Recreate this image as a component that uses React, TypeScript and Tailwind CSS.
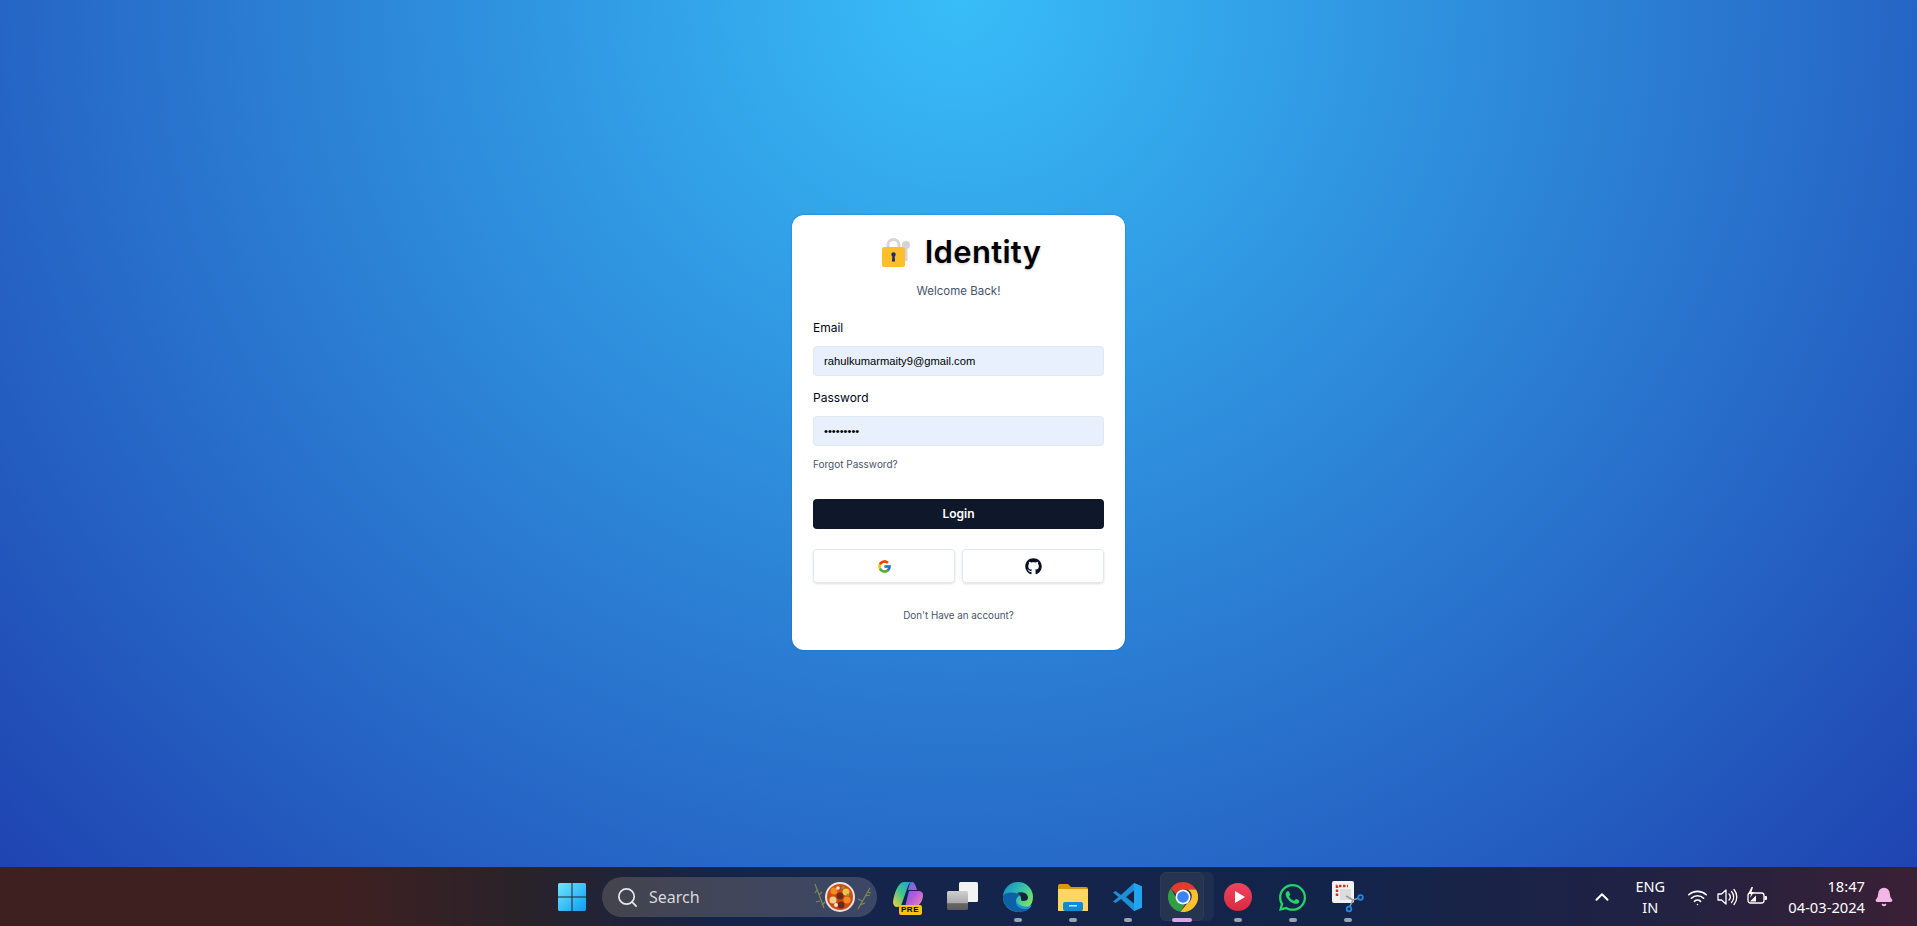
import React from "react";
import { Search, ChevronUp, Wifi, Bell } from "lucide-react";
import { FcGoogle } from "react-icons/fc";
import { FaGithub, FaWhatsapp } from "react-icons/fa";

function LockIcon() {
  return (
    <svg width="28" height="29" viewBox="0 0 28 29">
      <circle cx="24" cy="7" r="4" fill="#d4d4d4" />
      <rect x="22.500" y="9" width="3" height="14" fill="#d4d4d4" />
      <path d="M6 10V7a5.500 5.500 0 0 1 11 0v3" fill="none" stroke="#d6d6d6" strokeWidth="3" />
      <rect x="0" y="9" width="23" height="20" rx="2.500" fill="#fbbf2e" />
      <circle cx="11.500" cy="16.500" r="2.200" fill="#1e2a6e" />
      <path d="M10.500 17h2l.6 6.500h-3.200z" fill="#1e2a6e" />
    </svg>
  );
}

function WindowsLogo() {
  return (
    <svg width="30" height="30" viewBox="0 0 30 30">
      <defs>
        <linearGradient id="win" x1="0" y1="0" x2="1" y2="1">
          <stop offset="0" stopColor="#6fe6ff" />
          <stop offset="1" stopColor="#0f9bf5" />
        </linearGradient>
      </defs>
      <path d="M1 2.500A1.500 1.500 0 0 1 2.500 1H14.500v13.500H1zM15.500 1h12A1.500 1.500 0 0 1 29 2.500v12H15.500zM1 15.500h13.500V29h-12A1.500 1.500 0 0 1 1 27.500zM15.500 15.500H29v12a1.500 1.500 0 0 1-1.500 1.500h-12z" fill="url(#win)" />
    </svg>
  );
}

function Soup() {
  return (
    <svg width="64" height="34" viewBox="0 0 64 34">
      <g stroke="#7f8a55" strokeWidth="1.200" fill="none">
        <path d="M7 4l9 24M9 10l-2 3M11 15l3-3M12 21l-4 1M14 25l3-3" />
        <path d="M62 8l-12 21M60 12l3 1M57 16l5-1M54 21l-4-2M52 25l5-2" />
      </g>
      <circle cx="32" cy="17" r="15" fill="#e9e4dc" />
      <circle cx="32" cy="17" r="13" fill="#cf4a17" />
      <circle cx="26" cy="11" r="3.500" fill="#f58a1f" />
      <circle cx="38" cy="12" r="3.500" fill="#f2c14e" />
      <circle cx="32" cy="16" r="3.500" fill="#6b2a1a" />
      <circle cx="39" cy="20" r="3.500" fill="#f58a1f" />
      <circle cx="25" cy="20" r="3.500" fill="#f0d08a" />
      <circle cx="33" cy="25" r="3.500" fill="#6b2a1a" />
      <circle cx="30" cy="8" r="1.800" fill="#efe7dc" />
      <circle cx="35" cy="7.500" r="1.500" fill="#5fa83a" />
      <circle cx="28" cy="25" r="2" fill="#efe7dc" />
      <circle cx="40" cy="15" r="1.500" fill="#5fa83a" />
    </svg>
  );
}

function Copilot() {
  return (
    <div className="relative w-[30px] h-[30px]">
      <svg width="30" height="27" viewBox="0 0 30 27">
        <defs>
          <linearGradient id="co1" x1="0" y1="1" x2="1" y2="0">
            <stop offset="0" stopColor="#f5d33b" />
            <stop offset="0.500" stopColor="#3fc48e" />
            <stop offset="1" stopColor="#1f9be0" />
          </linearGradient>
          <linearGradient id="co2" x1="0" y1="0" x2="1" y2="1">
            <stop offset="0" stopColor="#3b7de8" />
            <stop offset="0.500" stopColor="#b05ad8" />
            <stop offset="1" stopColor="#f08bb4" />
          </linearGradient>
        </defs>
        <path d="M11 0h8c-2 0-3 2-4 4L9 21c-1 3-2 4-5 4-2 0-4-2-4-5C1 12 5 0 11 0z" fill="url(#co1)" />
        <path d="M19 0c2 0 3 2 4 5l1 3h-9l1-4c1-2 1-4 3-4zM16 9h9c3 0 5 1 5 4 0 6-4 12-9 12h-9z" fill="url(#co2)" />
      </svg>
      <span className="absolute left-[6px] bottom-[-3px] w-[23px] h-[10px] bg-[#f6c21c] rounded-[2px] text-[8px] leading-[10px] font-bold tracking-[0.5px] text-black text-center font-['Liberation_Sans',sans-serif]">
        PRE
      </span>
    </div>
  );
}

function TaskView() {
  return (
    <svg width="32" height="30" viewBox="0 0 32 30">
      <defs>
        <linearGradient id="tv" x1="0" y1="0" x2="0" y2="1">
          <stop offset="0" stopColor="#cfcfcf" />
          <stop offset="0.650" stopColor="#a8a8a8" />
          <stop offset="0.660" stopColor="#666666" />
          <stop offset="1" stopColor="#5a5a5a" />
        </linearGradient>
      </defs>
      <rect x="12" y="0" width="19" height="20" rx="1.500" fill="#f3f3f3" />
      <rect x="0" y="9" width="21" height="19" rx="1.500" fill="url(#tv)" />
    </svg>
  );
}

function Edge() {
  return (
    <svg width="30" height="30" viewBox="0 0 30 30">
      <defs>
        <linearGradient id="ed1" x1="0" y1="0" x2="1" y2="0.600">
          <stop offset="0" stopColor="#0f8ad0" />
          <stop offset="0.600" stopColor="#36c3a8" />
          <stop offset="1" stopColor="#7de35e" />
        </linearGradient>
      </defs>
      <circle cx="15" cy="15" r="15" fill="url(#ed1)" />
      <path d="M0 14c0 9 7 16 16 16 4 0 8-1 11-4-6 2-14 0-14-7 0-3 2-5 5-6-6-3-15-4-18 1z" fill="#0d5fa8" />
      <path d="M14 11c5-2 11 0 11 5 0 2-2 3-5 3-2 0-2-1-2-2 0-3-1-5-4-6z" fill="#14233f" />
      <path d="M13 19c0 5 5 9 12 8 2-1 3-2 4-4-3 2-7 2-10 1-3-1-5-3-6-5z" fill="#1e8ee0" />
    </svg>
  );
}

function Folder() {
  return (
    <svg width="30" height="27" viewBox="0 0 30 27">
      <path d="M0 2a2 2 0 0 1 2-2h8l3 3h15a2 2 0 0 1 2 2v3H0z" fill="#d99a0a" />
      <path d="M0 5h30v22H0z" fill="#ffd661" />
      <rect x="5" y="18" width="20" height="9" rx="2" fill="#0f8ad8" />
      <rect x="11" y="21" width="8" height="1.500" fill="#bfe4fb" />
    </svg>
  );
}

function VsCode() {
  return (
    <svg width="30" height="30" viewBox="0 0 30 30">
      <path d="M21 1l8 3.500v21L21 29 8 17 2.500 21 0 19.500 5.500 15 0 10.500 2.500 9 8 13z" fill="#1b8fd8" />
      <path d="M21 8.500L13 15l8 6.500z" fill="#14233f" />
      <path d="M21 1l8 3.500v21L21 29z" fill="#22a5f1" />
    </svg>
  );
}

function Chrome() {
  return (
    <svg width="30" height="30" viewBox="0 0 30 30">
      <path d="M15 0a15 15 0 0 1 13 7.500H15a7.500 7.500 0 0 0-7 4.800L2.800 6.200A15 15 0 0 1 15 0z" fill="#e33b2e" />
      <path d="M2.800 6.200L9 17.500a7.500 7.500 0 0 0 8 5L12.500 29.800A15 15 0 0 1 2.800 6.200z" fill="#2f9e44" />
      <path d="M28 7.500A15 15 0 0 1 12.500 29.800L19.500 21a7.500 7.500 0 0 0 0-13.500z" fill="#fbc02d" />
      <circle cx="15" cy="15" r="7.500" fill="#fff" />
      <circle cx="15" cy="15" r="5.800" fill="#3b82f6" />
    </svg>
  );
}

function PlayIcon() {
  return (
    <svg width="28" height="28" viewBox="0 0 28 28">
      <defs>
        <linearGradient id="pl" x1="0" y1="0" x2="0" y2="1">
          <stop offset="0" stopColor="#f0435f" />
          <stop offset="1" stopColor="#d92a3f" />
        </linearGradient>
      </defs>
      <circle cx="14" cy="14" r="14" fill="url(#pl)" />
      <path d="M11 8l10 6-10 6z" fill="#fff" />
    </svg>
  );
}

function Snip() {
  return (
    <svg width="32" height="32" viewBox="0 0 32 32">
      <rect x="0" y="0" width="22" height="22" rx="2" fill="#f2f2f2" />
      <path d="M5 15V5h11" fill="none" stroke="#c8361c" strokeWidth="2.500" strokeDasharray="2.500 1.500" />
      <rect x="8" y="8" width="11" height="11" fill="#dcdcdc" />
      <path d="M14 15l7 4 6-2M21 19l-3 6" fill="none" stroke="#9a9a9a" strokeWidth="1.500" />
      <circle cx="28.500" cy="16.500" r="2.300" fill="none" stroke="#1e88e5" strokeWidth="1.800" />
      <circle cx="17" cy="28" r="2.300" fill="none" stroke="#1e88e5" strokeWidth="1.800" />
    </svg>
  );
}

function VolumeIcon() {
  return (
    <svg width="21" height="20" viewBox="0 0 21 20" fill="none" stroke="currentColor" strokeWidth="1.300">
      <path d="M1 7v6h3.500L9 17V3L4.500 7z" strokeLinejoin="round" />
      <path d="M12 7a4 4 0 0 1 0 6M14.500 4.500a8 8 0 0 1 0 11M17 2.500a11.500 11.500 0 0 1 0 15" strokeLinecap="round" />
    </svg>
  );
}

function BatteryIcon() {
  return (
    <svg width="21" height="20" viewBox="0 0 21 20">
      <rect x="1" y="6" width="16" height="10" rx="2.500" fill="none" stroke="currentColor" strokeWidth="1.300" />
      <rect x="17.500" y="9" width="2.500" height="4" rx="1" fill="currentColor" />
      <path d="M3 14.500l6-6v6z" fill="currentColor" />
      <path d="M4.500 0L1 7h3L3 11l4-6H4.500l1.500-5z" fill="currentColor" />
    </svg>
  );
}

function TaskIcon({ children, open = false }: { children: React.ReactNode; open?: boolean }) {
  return (
    <div className="relative w-[55px] h-full flex items-center justify-center">
      {children}
      {open && <span className="absolute bottom-[4px] w-[8px] h-[4px] rounded-full bg-[#98a2b3]" />}
    </div>
  );
}

export default function App() {
  return (
    <div className="w-full h-[926px] flex flex-col overflow-hidden font-['Inter',sans-serif] bg-[radial-gradient(ellipse_at_top,#38bdf8,#1e40af)]">
      <main className="flex-1 flex items-center justify-center pb-[2px]">
        <div className="w-[333px] h-[435px] bg-white rounded-[12px] px-[21px] pt-[17px] shadow-[0_0_2px_rgba(3,105,200,0.8)]">
          <div className="flex items-center justify-center gap-[15px] h-[40px] pl-[6px]">
            <LockIcon />
            <h1 className="text-[31px] leading-[40px] font-semibold tracking-[0.3px] text-black [text-shadow:0_1px_3px_rgba(0,0,0,0.2)]">
              Identity
            </h1>
          </div>
          <p className="mt-[11px] text-center text-[11.500px] leading-[16px] text-[#475569]">Welcome Back!</p>
          <div className="mt-[21px] text-[12px] leading-[16px] text-[#020617]">Email</div>
          <input
            readOnly
            value="rahulkumarmaity9@gmail.com"
            className="mt-[10px] block w-full h-[30px] px-[10px] rounded-[4px] border border-[#e2e8f0] bg-[#e8f0fe] text-[11.200px] text-black font-['Liberation_Sans',sans-serif] outline-none"
          />
          <div className="mt-[14px] text-[12px] leading-[16px] text-[#020617]">Password</div>
          <input
            readOnly
            type="password"
            value="rahul1234"
            className="mt-[10px] block w-full h-[30px] px-[10px] rounded-[4px] border border-[#e2e8f0] bg-[#e8f0fe] text-[11.200px] text-black font-['Liberation_Sans',sans-serif] outline-none"
          />
          <a className="block mt-[11px] text-[10px] leading-[14px] text-[#475569]">Forgot Password?</a>
          <button className="mt-[28px] block w-full h-[30px] rounded-[4px] bg-[#0f172a] text-white text-[12px] font-semibold">
            Login
          </button>
          <div className="mt-[20px] grid grid-cols-2 gap-[7px]">
            <button className="h-[34px] rounded-[4px] border border-[#e2e8f0] shadow-sm flex items-center justify-center">
              <FcGoogle className="w-[15px] h-[15px]" />
            </button>
            <button className="h-[34px] rounded-[4px] border border-[#e2e8f0] shadow-sm flex items-center justify-center">
              <FaGithub className="w-[17px] h-[17px] text-[#0b1020]" />
            </button>
          </div>
          <p className="mt-[26px] text-center text-[9.800px] leading-[14px] text-[#475569]">Don't Have an account?</p>
        </div>
      </main>

      <footer className="h-[59px] flex items-center pl-[544px] border-t border-[#1a2a55] bg-[linear-gradient(90deg,#3e2021_0%,#3e2021_18%,#2a2229_27%,#15244a_38%,#13244a_70%,#1f2244_85%,#3a2035_100%)] font-['Noto_Sans',sans-serif] text-white">
        <TaskIcon><WindowsLogo /></TaskIcon>
        <div className="ml-[3px] mr-[3px] w-[275px] h-[40px] rounded-full flex items-center bg-[linear-gradient(90deg,#44444f,#3c4766)] pl-[14px] shrink-0">
          <Search className="w-[23px] h-[23px] text-[#e6e6e6]" strokeWidth={1.800} />
          <span className="ml-[10px] text-[16px] text-[#d9d9d9] flex-1">Search</span>
          <div className="mr-[5px]"><Soup /></div>
        </div>
        <TaskIcon><Copilot /></TaskIcon>
        <TaskIcon><TaskView /></TaskIcon>
        <TaskIcon open><Edge /></TaskIcon>
        <TaskIcon open><Folder /></TaskIcon>
        <TaskIcon open><VsCode /></TaskIcon>
        <div className="relative w-[55px] h-full flex items-center justify-center">
          <span className="absolute left-[9px] top-[4px] w-[50px] h-[49px] rounded-[6px] bg-[#1f2d4f]" />
          <span className="absolute left-[5px] top-[4px] w-[44px] h-[49px] rounded-[6px] bg-[#27344f] border border-[#2e3b58]" />
          <div className="relative"><Chrome /></div>
          <span className="absolute bottom-[4px] left-[17px] w-[20px] h-[4px] rounded-full bg-[#d9a6e6]" />
        </div>
        <TaskIcon open><PlayIcon /></TaskIcon>
        <TaskIcon open><FaWhatsapp className="w-[31px] h-[31px] text-[#25d366]" /></TaskIcon>
        <TaskIcon open><Snip /></TaskIcon>

        <div className="flex-1" />
        <ChevronUp className="w-[22px] h-[22px] mr-[15px]" strokeWidth={2.200} />
        <div className="w-[44px] text-center text-[14.500px] leading-[21px]">
          <div>ENG</div>
          <div>IN</div>
        </div>
        <Wifi className="ml-[15px] w-[21px] h-[21px]" strokeWidth={1.800} />
        <div className="ml-[9px]"><VolumeIcon /></div>
        <div className="ml-[9px]"><BatteryIcon /></div>
        <div className="ml-[20px] text-right text-[14.700px] leading-[21px]">
          <div>18:47</div>
          <div>04-03-2024</div>
        </div>
        <Bell className="ml-[9px] mr-[23px] w-[20px] h-[20px] text-[#f3b6e6] fill-[#f3b6e6]" />
      </footer>
    </div>
  );
}
